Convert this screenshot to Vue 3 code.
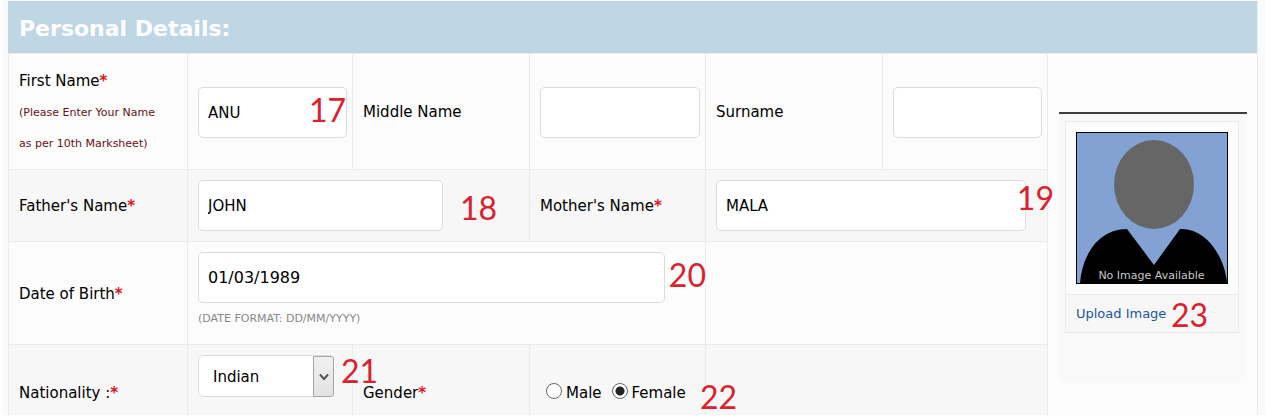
<script setup>
import { ref } from 'vue'

const firstName = ref('ANU')
const middleName = ref('')
const surname = ref('')
const fatherName = ref('JOHN')
const motherName = ref('MALA')
const birthDate = ref('01/03/1989')
const nationality = ref('Indian')
const gender = ref('female')
</script>

<template>
  <form class="page" @submit.prevent>
    <table class="details">
      <colgroup>
        <col class="col-label-first" />
        <col class="col-field" />
        <col class="col-label" />
        <col />
        <col class="col-label" />
        <col class="col-field" />
        <col class="col-photo" />
      </colgroup>
      <thead>
        <tr>
          <th colspan="7">Personal Details:</th>
        </tr>
      </thead>
      <tbody>
        <tr class="row names">
          <td>
            <label for="first-name">First Name<b class="req">*</b></label>
            <div class="note">(Please Enter Your Name<br />as per 10th Marksheet)</div>
          </td>
          <td>
            <input id="first-name" v-model="firstName" class="text" type="text" />
            <span class="mark m17">17</span>
          </td>
          <td><label for="middle-name">Middle Name</label></td>
          <td><input id="middle-name" v-model="middleName" class="text" type="text" /></td>
          <td><label for="surname">Surname</label></td>
          <td><input id="surname" v-model="surname" class="text" type="text" /></td>
          <td class="photo-cell" rowspan="4">
            <div class="panel">
              <div class="card">
                <div class="picture">
                  <svg viewBox="0 0 152 152" role="img" aria-label="No Image Available">
                    <rect x="0.5" y="0.5" width="151" height="151" fill="#82a2d4" stroke="#000" />
                    <ellipse cx="78" cy="52.500" rx="40" ry="44.500" fill="#666" />
                    <path d="M4 151C6 124 22 97 51 97L78 133L104 97C131 96 149 126 151 151Z" fill="#000" />
                    <text x="75.500" y="147" text-anchor="middle">No Image Available</text>
                  </svg>
                </div>
                <div class="upload">
                  <a href="#">Upload Image</a>
                  <span class="mark m23">23</span>
                </div>
              </div>
            </div>
          </td>
        </tr>
        <tr class="row shaded">
          <td class="name"><label for="father-name">Father's Name<b class="req">*</b></label></td>
          <td colspan="2">
            <input id="father-name" v-model="fatherName" class="text father" type="text" />
            <span class="mark m18">18</span>
          </td>
          <td class="name"><label for="mother-name">Mother's Name<b class="req">*</b></label></td>
          <td colspan="2">
            <input id="mother-name" v-model="motherName" class="text mother" type="text" />
            <span class="mark m19">19</span>
          </td>
        </tr>
        <tr class="row">
          <td class="name"><label for="birth-date">Date of Birth<b class="req">*</b></label></td>
          <td colspan="3">
            <input id="birth-date" v-model="birthDate" class="text birth" type="text" aria-describedby="date-hint" />
            <div id="date-hint" class="hint">(DATE FORMAT: DD/MM/YYYY)</div>
            <span class="mark m20">20</span>
          </td>
          <td colspan="2"></td>
        </tr>
        <tr class="row shaded last">
          <td><label for="nationality">Nationality :<b class="req">*</b></label></td>
          <td class="select-cell">
            <div class="select-box">
              <select id="nationality" v-model="nationality">
                <option>Indian</option>
                <option>Other</option>
              </select>
              <span class="arrow">
                <svg viewBox="0 0 10 8"><path d="M1 1.500L5 6L9 1.500" fill="none" stroke="#555" stroke-width="2" /></svg>
              </span>
            </div>
            <span class="mark m21">21</span>
          </td>
          <td><span id="gender-label">Gender<b class="req">*</b></span></td>
          <td>
            <div class="radios" role="radiogroup" aria-labelledby="gender-label">
              <label><input v-model="gender" type="radio" name="gender" value="male" />Male</label>
              <label><input v-model="gender" type="radio" name="gender" value="female" />Female</label>
            </div>
          </td>
          <td colspan="2"><span class="mark m22">22</span></td>
        </tr>
      </tbody>
    </table>
  </form>
</template>

<style>
body {
  background: #fff;
}
</style>

<style scoped>
.page {
  margin: 0 9px 0 2px;
  padding: 1px 7px 0 6px;
  background: #fafafa;
  font-family: Verdana, "DejaVu Sans", sans-serif;
  font-size: 15px;
  line-height: 31px;
  color: #000;
}
.details {
  width: 100%;
  table-layout: fixed;
  border-collapse: separate;
  border-spacing: 0;
  border-right: 1px solid #ebebeb;
}
.col-label-first { width: 179px; }
.col-field { width: 165px; }
.col-label { width: 177px; }
.col-photo { width: 210px; }
th {
  height: 52px;
  padding: 2px 11px 0;
  box-sizing: border-box;
  background: #bfd6e5;
  color: #fff;
  font-size: 22px;
  font-weight: bold;
  text-align: left;
}
td {
  position: relative;
  padding: 10px 5px 10px 10px;
  border-top: 1px solid #ebebeb;
  border-left: 1px solid #ebebeb;
  background: #fcfcfc;
  vertical-align: middle;
}
.name {
  padding-top: 12px;
}
.names td {
  padding-top: 12px;
  padding-bottom: 10px;
}
.shaded td {
  background: #f7f7f7;
}
.req {
  color: #e3141c;
}
.note {
  font-size: 11px;
  color: #6b1015;
}
.text {
  display: block;
  width: 100%;
  height: 51px;
  box-sizing: border-box;
  padding: 0 9px;
  border: 1px solid #dcdcdc;
  border-radius: 5px;
  background: #fff;
  font: inherit;
  color: #000;
}
.father { width: 75%; }
.mother { width: 95%; }
.birth { width: 93%; font-size: 16px; }
.hint {
  font-size: 11px;
  color: #888;
}
.last td {
  height: 64px;
  padding-top: 0;
  padding-bottom: 6px;
  vertical-align: bottom;
}
.last .select-cell {
  height: 60px;
  padding-top: 10px;
  padding-bottom: 0;
  vertical-align: top;
}
.select-box {
  position: relative;
  width: 136px;
}
select {
  display: block;
  appearance: none;
  width: 100%;
  height: 42px;
  padding: 2px 26px 0 14px;
  border: 1px solid #dcdcdc;
  border-radius: 5px;
  background: #fff;
  font: inherit;
  color: #000;
}
.arrow {
  position: absolute;
  top: 1px;
  right: 0;
  bottom: 0;
  display: flex;
  align-items: center;
  justify-content: center;
  width: 19px;
  border: 1px solid #a6a6a6;
  border-radius: 0 3px 3px 0;
  background: linear-gradient(#f0f0f0, #e2e2e2);
  pointer-events: none;
}
.arrow svg {
  width: 10px;
  height: 8px;
}
.radios {
  display: flex;
  gap: 10px;
  padding-left: 6px;
}
.radios label {
  display: flex;
  align-items: center;
  gap: 4px;
}
.radios input {
  appearance: none;
  width: 16px;
  height: 16px;
  margin: 0 0 6px;
  border: 1px solid #666;
  border-radius: 50%;
  background: #fff;
}
.radios input:checked {
  background: radial-gradient(circle, #222 0 4px, #fff 5px);
}
.names .photo-cell {
  padding: 58px 10px 10px 11px;
  vertical-align: top;
}
.panel {
  height: 260px;
  padding: 7px 8px 0 6px;
  border-top: 2px solid #413f40;
  background: #f9f9f9;
}
.card {
  border: 1px solid #ebebeb;
  background: #fcfcfc;
}
.picture {
  padding: 10px;
}
.picture svg {
  display: block;
  width: 152px;
  height: 152px;
}
.picture text {
  font-size: 11px;
  fill: #c8c8c8;
}
.upload {
  position: relative;
  padding: 3px 10px;
  border-top: 1px solid #ebebeb;
  background: #f7f7f7;
  font-size: 13px;
}
.upload a {
  color: #1a55a0;
  text-decoration: none;
}
.mark {
  position: absolute;
  z-index: 1;
  font: 32px/32px Lato, sans-serif;
  color: #d9222d;
  pointer-events: none;
}
.m17 { top: 40px; right: 6px; }
.m18 { top: 22px; left: 272px; }
.m19 { top: 12px; right: -7px; }
.m20 { top: 17px; right: -1px; }
.m21 { top: 10px; right: -26px; }
.m22 { top: 36px; left: -6px; }
.m23 { top: 4px; left: 105px; }
</style>
